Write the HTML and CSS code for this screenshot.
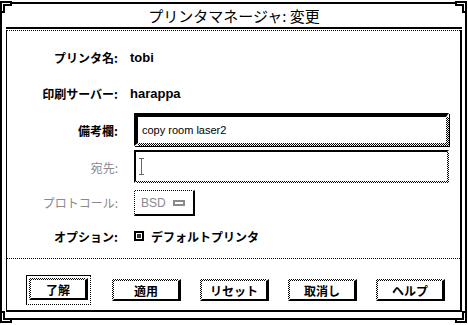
FILE: index.html
```html
<!DOCTYPE html>
<html lang="ja">
<head>
  <meta charset="UTF-8">
  <title>プリンタマネージャ: 変更</title>
  <link rel="stylesheet" href="styles.css">
</head>
<body>
  <div class="frame">
    <svg class="corner tl" width="12" height="12"><polygon points="1,1 11,1 11,4 4,4 4,11 1,11" /></svg>
    <svg class="corner tr" width="12" height="12"><polygon points="1,1 11,1 11,11 8,11 8,4 1,4" /></svg>
    <svg class="corner bl" width="12" height="12"><polygon points="1,1 4,1 4,8 11,8 11,11 1,11" /></svg>
    <svg class="corner br" width="12" height="12"><polygon points="8,1 11,1 11,11 1,11 1,8 8,8" /></svg>

    <div class="title">プリンタマネージャ: 変更</div>

    <div class="panel">
      <div class="form">
        <div class="label">プリンタ名:</div>
        <div class="value">tobi</div>

        <div class="label">印刷サーバー:</div>
        <div class="value">harappa</div>

        <div class="label">備考欄:</div>
        <div class="field focused"><span>copy room laser2</span></div>

        <div class="label disabled">宛先:</div>
        <div class="field second"><span class="ibeam"></span></div>

        <div class="label disabled">プロトコール:</div>
        <div class="option-row">
          <div class="option">BSD <span class="option-mark"></span></div>
        </div>

        <div class="label">オプション:</div>
        <div class="check-row">
          <span class="check"><span></span></span>
          <span>デフォルトプリンタ</span>
        </div>
      </div>

      <div class="actions">
        <div class="default-ring"><button class="btn">了解</button></div>
        <button class="btn">適用</button>
        <button class="btn">リセット</button>
        <button class="btn">取消し</button>
        <button class="btn">ヘルプ</button>
      </div>
    </div>
  </div>
</body>
</html>
```

FILE: styles.css
```css
body {
  margin: 0;
  width: 468px;
  height: 325px;
  overflow: hidden;
  background: #fff;
  color: #000;
  font-family: "Liberation Sans", "Noto Sans CJK JP", sans-serif;
}
.frame {
  position: relative;
  box-sizing: border-box;
  margin: 2px 1px 0 0;
  height: 318px;
  border: 2px solid #000;
  padding: 0 3px 5px 4px;
  display: flex;
  flex-direction: column;
}
.corner {
  position: absolute;
}
.corner polygon {
  fill: #fff;
  stroke: #000;
  stroke-width: 2;
}
.corner.tl { left: -2px; top: -3px; }
.corner.tr { right: -2px; top: -3px; }
.corner.bl { left: -2px; bottom: -5px; }
.corner.br { right: -2px; bottom: -5px; }

.title {
  height: 23px;
  line-height: 23px;
  border-bottom: 2px solid #000;
  text-align: center;
  font-family: "Noto Sans CJK JP", sans-serif;
  font-size: 15px;
}
.panel {
  margin-top: 1px;
  border-left: 1px solid #000;
  border-right: 2px solid #000;
  border-bottom: 2px solid #000;
  display: flex;
  flex-direction: column;
}

/* form area */
.form {
  box-sizing: border-box;
  height: 228px;
  border-top: 1px dotted #000;
  padding-top: 9px;
  display: grid;
  grid-template-columns: 111px 1fr;
  grid-template-rows: 34px 38px 36px 38px 32px 36px;
  column-gap: 12px;
  align-items: center;
}
.label {
  text-align: right;
  font-family: "Noto Sans CJK JP", sans-serif;
  font-weight: bold;
  font-size: 12px;
}
.label.disabled {
  color: #8a8a8a;
  font-weight: normal;
}
.value {
  font-weight: bold;
  font-size: 13px;
}

/* stippled top/left shadow: transparent border over a checker background */
.field,
.option,
.btn {
  background:
    linear-gradient(#fff, #fff) padding-box,
    repeating-conic-gradient(#000 0 25%, #fff 0 50%) 0 0 / 2px 2px border-box;
}
.field {
  align-self: start;
  box-sizing: border-box;
  margin: 1px 11px 0 4px;
  height: 33px;
  border-style: solid;
  border-width: 2px;
  border-color: #000 transparent transparent #000;
  padding: 0 6px;
  display: flex;
  align-items: center;
  font-size: 11px;
}
.field.focused {
  border-width: 4px 3px 3px 4px;
  box-shadow: 1px 1px 0 #000;
  padding-left: 4px;
}
.field.second {
  margin-top: 2px;
  padding-left: 3px;
}
.ibeam {
  width: 5px;
  height: 17px;
  box-sizing: border-box;
  border-top: 1px solid #666;
  border-bottom: 1px solid #666;
  background: linear-gradient(90deg, transparent 2px, #666 2px, #666 3px, transparent 3px);
}
.option-row {
  align-self: start;
  margin: 4px 0 0 4px;
}
.option {
  display: inline-flex;
  align-items: center;
  box-sizing: border-box;
  width: 61px;
  height: 26px;
  padding-left: 6px;
  border-style: solid;
  border-width: 1px 2px 2px 1px;
  border-color: transparent #000 #000 transparent;
  font-family: "Liberation Sans", sans-serif;
  font-size: 12px;
  color: #8a8a8a;
}
.option-mark {
  margin-left: 7px;
  width: 12px;
  height: 6px;
  box-sizing: border-box;
  border: 2px solid #8a8a8a;
}
.check-row {
  margin-left: 4px;
  display: flex;
  align-items: center;
  gap: 7px;
  font-family: "Noto Sans CJK JP", sans-serif;
  font-weight: bold;
  font-size: 12px;
}
.check {
  width: 10px;
  height: 10px;
  box-sizing: border-box;
  border: 2px solid #000;
  padding: 1px;
  display: flex;
}
.check span {
  flex: 1;
  background: #333;
}

/* button area */
.actions {
  height: 52px;
  box-sizing: border-box;
  border-top: 1px dotted #000;
  padding: 16px 0 0 19px;
  display: flex;
  align-items: flex-start;
  gap: 19px;
}
.default-ring {
  box-sizing: border-box;
  width: 65px;
  height: 30px;
  border-top: 1px solid #000;
  border-left: 1px solid #000;
  border-right: 1px dotted #000;
  border-bottom: 1px dotted #000;
  padding: 2px 2px 2px 2px;
  display: flex;
  margin-right: 2px;
}
.btn {
  box-sizing: border-box;
  width: 69px;
  height: 22px;
  margin-top: 4px;
  padding: 0;
  border-style: solid;
  border-width: 2px 3px 2px 2px;
  border-color: transparent #000 #000 transparent;
  font-family: "Noto Sans CJK JP", sans-serif;
  font-weight: bold;
  font-size: 12px;
  color: #000;
}
.default-ring .btn {
  margin: 0;
  flex: 1;
}
```
